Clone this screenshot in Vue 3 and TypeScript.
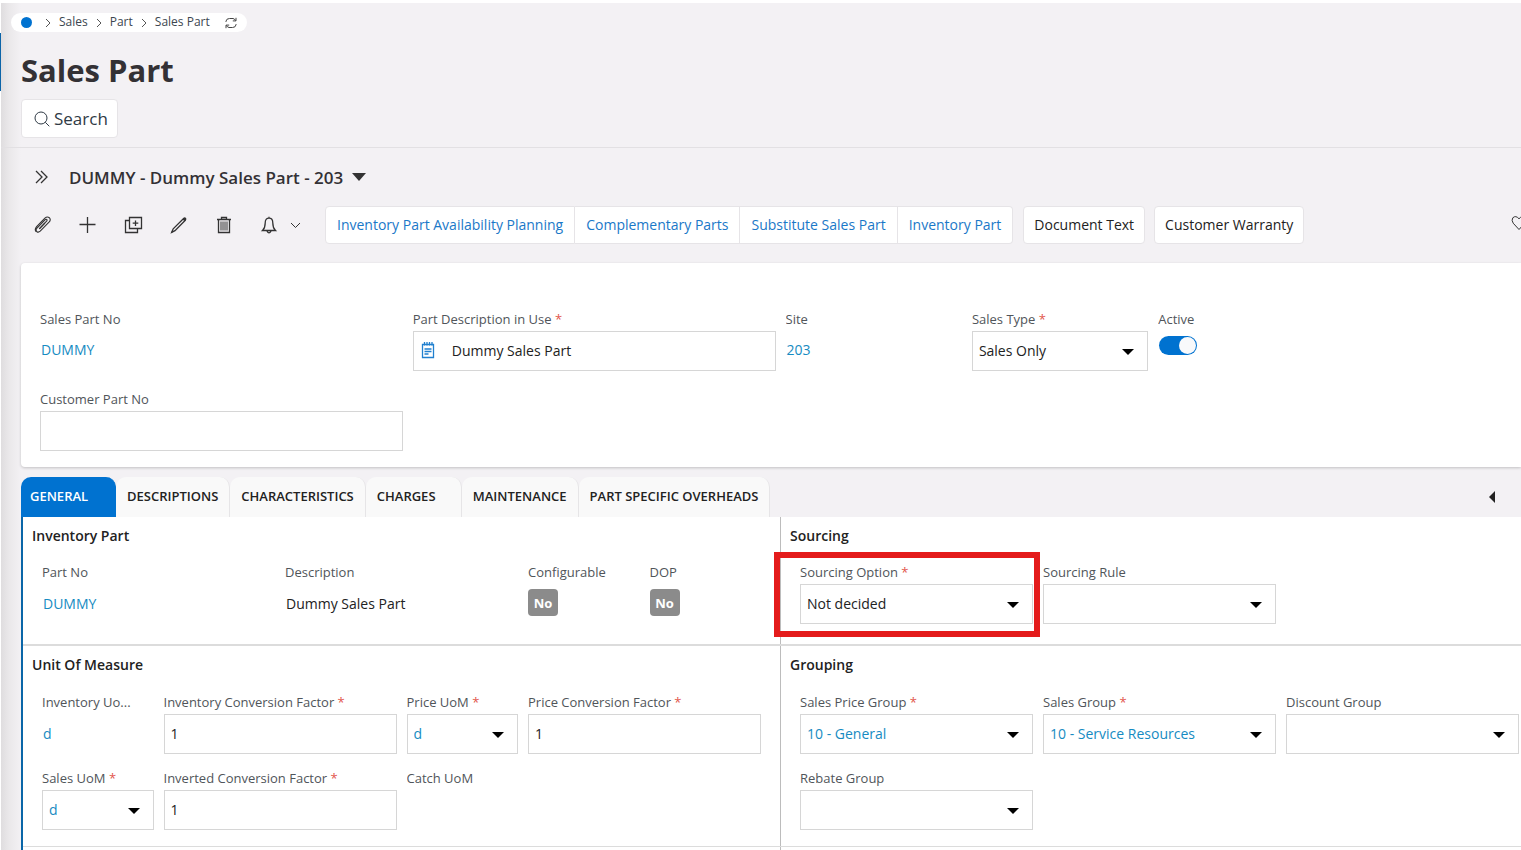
<script setup lang="ts">
import { ref } from 'vue'

type Kind = 'link' | 'text' | 'badge' | 'input' | 'select' | 'toggle' | 'note' | 'none'

interface Field {
  id: string
  label: string
  kind: Kind
  span: number
  value?: string
  required?: boolean
  accent?: boolean
  marked?: boolean
}

interface Section {
  title: string
  fields: Field[]
}

const crumbs: string[] = ['Sales', 'Part', 'Sales Part']

const linkCommands: string[] = [
  'Inventory Part Availability Planning',
  'Complementary Parts',
  'Substitute Sales Part',
  'Inventory Part',
]

const commands: string[] = ['Document Text', 'Customer Warranty']

const tabs: string[] = [
  'GENERAL',
  'DESCRIPTIONS',
  'CHARACTERISTICS',
  'CHARGES',
  'MAINTENANCE',
  'PART SPECIFIC OVERHEADS',
]
const activeTab = ref<string>('GENERAL')

const headFields: Field[] = [
  { id: 'sales-part-no', label: 'Sales Part No', kind: 'link', span: 2, value: 'DUMMY' },
  { id: 'part-description', label: 'Part Description in Use', kind: 'note', span: 2, value: 'Dummy Sales Part', required: true },
  { id: 'site', label: 'Site', kind: 'link', span: 1, value: '203' },
  { id: 'sales-type', label: 'Sales Type', kind: 'select', span: 1, value: 'Sales Only', required: true },
  { id: 'active', label: 'Active', kind: 'toggle', span: 1 },
  { id: 'customer-part-no', label: 'Customer Part No', kind: 'input', span: 2, value: '' },
]

const rows: Section[][] = [
  [
    {
      title: 'Inventory Part',
      fields: [
        { id: 'part-no', label: 'Part No', kind: 'link', span: 2, value: 'DUMMY' },
        { id: 'description', label: 'Description', kind: 'text', span: 2, value: 'Dummy Sales Part' },
        { id: 'configurable', label: 'Configurable', kind: 'badge', span: 1, value: 'No' },
        { id: 'dop', label: 'DOP', kind: 'badge', span: 1, value: 'No' },
      ],
    },
    {
      title: 'Sourcing',
      fields: [
        { id: 'sourcing-option', label: 'Sourcing Option', kind: 'select', span: 2, value: 'Not decided', required: true, marked: true },
        { id: 'sourcing-rule', label: 'Sourcing Rule', kind: 'select', span: 2, value: '' },
      ],
    },
  ],
  [
    {
      title: 'Unit Of Measure',
      fields: [
        { id: 'inventory-uom', label: 'Inventory Uo...', kind: 'link', span: 1, value: 'd' },
        { id: 'inventory-factor', label: 'Inventory Conversion Factor', kind: 'input', span: 2, value: '1', required: true },
        { id: 'price-uom', label: 'Price UoM', kind: 'select', span: 1, value: 'd', required: true, accent: true },
        { id: 'price-factor', label: 'Price Conversion Factor', kind: 'input', span: 2, value: '1', required: true },
        { id: 'sales-uom', label: 'Sales UoM', kind: 'select', span: 1, value: 'd', required: true, accent: true },
        { id: 'inverted-factor', label: 'Inverted Conversion Factor', kind: 'input', span: 2, value: '1', required: true },
        { id: 'catch-uom', label: 'Catch UoM', kind: 'none', span: 1 },
      ],
    },
    {
      title: 'Grouping',
      fields: [
        { id: 'sales-price-group', label: 'Sales Price Group', kind: 'select', span: 2, value: '10 - General', required: true, accent: true },
        { id: 'sales-group', label: 'Sales Group', kind: 'select', span: 2, value: '10 - Service Resources', required: true, accent: true },
        { id: 'discount-group', label: 'Discount Group', kind: 'select', span: 2, value: '' },
        { id: 'rebate-group', label: 'Rebate Group', kind: 'select', span: 2, value: '' },
      ],
    },
  ],
]

function isControl(kind: Kind): boolean {
  return kind === 'input' || kind === 'note' || kind === 'select' || kind === 'toggle'
}
</script>

<template>
  <div class="page">
    <div class="rail"><span class="rail-mark"></span></div>
    <main class="content">
      <header class="top">
        <nav class="crumbs" aria-label="Breadcrumb">
          <a href="#" class="home" aria-label="Home"></a>
          <template v-for="c in crumbs" :key="c">
            <svg class="sep" viewBox="0 0 6 10"><path d="M1 1l4 4-4 4" /></svg>
            <a href="#" class="crumb">{{ c }}</a>
          </template>
          <button class="refresh" type="button" aria-label="Refresh">
            <svg viewBox="0 0 12 12">
              <path d="M1 5V4.2Q1.4 1.5 4.5 1.5H8Q9.6 1.7 10.6 3.6M11 .8v3.1H7.8M11 7v.8Q10.6 10.500 7.500 10.500H4Q2.400 10.300 1.400 8.400M1 11.200V8.100h3.200" />
            </svg>
          </button>
        </nav>
        <h1>Sales Part</h1>
        <button class="search" type="button">
          <svg viewBox="0 0 16 16"><circle cx="7" cy="7" r="6" /><path d="M11.300 11.300L15.300 15.300" /></svg>
          Search
        </button>
      </header>

      <div class="record">
        <button class="plain" type="button" aria-label="Expand list">
          <svg class="ic-double" viewBox="0 0 13 14"><path d="M1 1l6 6-6 6M6 1l6 6-6 6" /></svg>
        </button>
        <h2>DUMMY - Dummy Sales Part - 203</h2>
        <button class="plain" type="button" aria-label="Choose record">
          <svg class="ic-down" viewBox="0 0 14 8"><path d="M0 0h14L7 8z" /></svg>
        </button>
      </div>

      <div class="toolbar">
        <div class="icons">
          <button class="plain" type="button" aria-label="Attachments">
            <svg class="ic clip" viewBox="0 0 18 18">
              <path d="M5.300 12.800L12.600 5.200Q13.400 4.200 12.700 3.500Q11.900 2.900 11 3.800L3 12Q1.300 14 2.700 15.500Q4.300 17 6.200 15.200L15 6.200Q17.300 3.700 15.300 1.700Q13.200 0 10.900 2.200L2.600 10.700Q.3 13.300 2 15.700" />
              <path d="M5.300 12.800L10.900 7" />
            </svg>
          </button>
          <button class="plain" type="button" aria-label="New">
            <svg class="ic" viewBox="0 0 18 18"><path d="M8.500 1v16M.5 8.500h16" /></svg>
          </button>
          <button class="plain" type="button" aria-label="Duplicate">
            <svg class="ic wide" viewBox="0 0 19 18">
              <path d="M5.500 1.500h12v11h-12zM5.500 4.500h-4v12h12v-4M11.500 4.500v5.500M8.700 7.200h5.600" />
            </svg>
          </button>
          <button class="plain" type="button" aria-label="Edit">
            <svg class="ic" viewBox="0 0 18 18">
              <path d="M1.700 16.300L3.200 12.800L13.600 2.500Q14.600 1.600 15.400 2.300Q16.200 3.200 15.300 4.300L5 14.700z" />
              <path class="solid" d="M1 17l1.300-2.800 1.500 1.500zM12.600 3.500l1.700-1.500 1.400.4.300 1.400-1.500 1.500z" />
            </svg>
          </button>
          <button class="plain" type="button" aria-label="Delete">
            <svg class="ic" viewBox="0 0 18 18">
              <path d="M2 3.500h14M6.500 3.500v-2h5v2M3.500 3.500v13h11v-13" />
              <path class="fine" d="M6 5.500v9M8 5.500v9M10 5.500v9M12 5.500v9" />
            </svg>
          </button>
          <button class="plain" type="button" aria-label="Notifications">
            <svg class="ic" viewBox="0 0 18 18">
              <path d="M2.500 14.500Q5.200 12 5.200 7Q5.200 2.200 9 2.200T12.800 7Q12.800 12 15.500 14.500zM9 .8v1.400M7 15.200Q9 18.500 11 15.200" />
            </svg>
          </button>
          <button class="plain more" type="button" aria-label="More notifications">
            <svg class="ic-chev" viewBox="0 0 11 7"><path d="M1 1l4.500 4.500L10 1" /></svg>
          </button>
        </div>
        <div class="group">
          <button v-for="c in linkCommands" :key="c" class="cmd" type="button">{{ c }}</button>
        </div>
        <button v-for="c in commands" :key="c" class="cmd" type="button">{{ c }}</button>
        <button class="plain fav" type="button" aria-label="Favourite">
          <svg viewBox="0 0 16 16"><path d="M8 14.500L2.200 8.200Q.2 5.200 1.800 2.800Q4.800 0 8 3.800Q11.200 0 14.200 2.800Q15.800 5.200 13.800 8.200z" /></svg>
        </button>
      </div>

      <section class="card grid">
        <div v-for="f in headFields" :key="f.id" class="field" :class="[`span-${f.span}`, { fresh: f.id === 'customer-part-no' }]">
          <component :is="isControl(f.kind) ? 'label' : 'span'" class="label" :for="isControl(f.kind) ? f.id : undefined">
            {{ f.label }} <em v-if="f.required">*</em>
          </component>
          <a v-if="f.kind === 'link'" href="#" class="value link">{{ f.value }}</a>
          <div v-else-if="f.kind === 'note'" class="box note">
            <svg class="ic-note" viewBox="0 0 14 18">
              <path d="M1.500 3.500h11v13h-11zM3.500 8h7M3.500 10.500h7M3.500 13h4" />
              <path d="M3.500 1v3.500M6 1v3.500M8.500 1v3.500M11 1v3.500" />
            </svg>
            <input :id="f.id" type="text" :value="f.value" />
          </div>
          <div v-else-if="f.kind === 'select'" class="pick">
            <select :id="f.id" class="box"><option>{{ f.value }}</option></select>
            <svg class="arrow" viewBox="0 0 12 6"><path d="M0 0h12L6 6z" /></svg>
          </div>
          <input v-else-if="f.kind === 'toggle'" :id="f.id" class="toggle" type="checkbox" checked />
          <input v-else :id="f.id" class="box" type="text" :value="f.value" />
        </div>
      </section>

      <div class="tabbar">
        <div class="tabs" role="tablist">
          <button
            v-for="t in tabs"
            :key="t"
            type="button"
            role="tab"
            class="tab"
            :class="{ active: t === activeTab }"
            :aria-selected="t === activeTab"
            @click="activeTab = t"
          >{{ t }}</button>
        </div>
        <button class="plain collapse" type="button" aria-label="Scroll tabs">
          <svg viewBox="0 0 6 12"><path d="M6 0v12L0 6z" /></svg>
        </button>
      </div>

      <div class="panel">
        <div v-for="(row, r) in rows" :key="r" class="panel-row">
          <section v-for="s in row" :key="s.title" class="section">
            <h3>{{ s.title }}</h3>
            <div class="grid">
              <div v-for="f in s.fields" :key="f.id" class="field" :class="`span-${f.span}`">
                <component :is="isControl(f.kind) ? 'label' : 'span'" class="label" :for="isControl(f.kind) ? f.id : undefined">
                  {{ f.label }} <em v-if="f.required">*</em>
                </component>
                <a v-if="f.kind === 'link'" href="#" class="value link">{{ f.value }}</a>
                <span v-else-if="f.kind === 'text'" class="value">{{ f.value }}</span>
                <span v-else-if="f.kind === 'badge'" class="badge">{{ f.value }}</span>
                <div v-else-if="f.kind === 'select'" class="pick">
                  <select :id="f.id" class="box" :class="{ accent: f.accent }"><option>{{ f.value }}</option></select>
                  <svg class="arrow" viewBox="0 0 12 6"><path d="M0 0h12L6 6z" /></svg>
                </div>
                <input v-else-if="f.kind === 'input'" :id="f.id" class="box" type="text" :value="f.value" />
                <span v-if="f.marked" class="marker"></span>
              </div>
            </div>
          </section>
        </div>
        <div class="panel-row rest">
          <section class="section"></section>
          <section class="section"></section>
        </div>
      </div>
    </main>
  </div>
</template>

<style>
body {
  margin: 0;
  background: #f3f1f4;
}
</style>

<style scoped>
.page {
  display: flex;
  box-sizing: border-box;
  min-height: 100vh;
  overflow: hidden;
  border-top: 3px solid #fff;
  background: #f3f1f4;
  color: #222;
  font-family: 'Open Sans', 'Noto Sans', sans-serif;
  font-size: 14px;
}
.rail {
  flex: none;
  width: 1px;
  background: #fff;
}
.rail-mark {
  display: block;
  height: 58px;
  margin-top: 30px;
  background: #0b64a8;
}
.content {
  display: flex;
  flex: 1;
  flex-direction: column;
  min-width: 0;
  background: linear-gradient(to right, #dfdddf, #eae8ea 8px, #f3f1f4 20px);
}
button,
input,
select {
  margin: 0;
  font: inherit;
  color: inherit;
}
a {
  color: inherit;
  text-decoration: none;
}
svg {
  display: block;
  fill: none;
  stroke: #333;
}

.top {
  display: flex;
  flex-direction: column;
  align-items: flex-start;
  padding: 10px 0 9px 20px;
  border-bottom: 1px solid #e2e0e3;
}
.crumbs {
  display: flex;
  align-items: center;
  height: 19px;
  margin-left: -10px;
  padding: 0 10px;
  border-radius: 10px;
  background: #fff;
  color: #3c4650;
  font-size: 12px;
}
.crumb {
  padding-bottom: 2px;
}
.home {
  width: 11px;
  height: 11px;
  margin-right: 5px;
  border-radius: 50%;
  background: #0072d0;
}
.sep {
  width: 6px;
  height: 10px;
  margin: 0 8px;
  stroke: #555;
}
.refresh {
  margin-left: 15px;
  padding: 0;
  border: 0;
  background: none;
}
.refresh svg {
  width: 12px;
  height: 12px;
  stroke: #444;
}
h1 {
  margin: 16px 0 7px;
  color: #333135;
  font-size: 31px;
  font-weight: 700;
  line-height: 44px;
}
.search {
  display: flex;
  align-items: center;
  gap: 4px;
  height: 39px;
  padding: 0 9px 0 12px;
  border: 1px solid #e6e4e7;
  border-radius: 4px;
  background: #fff;
  color: #2f3a45;
  font-size: 17px;
}
.search svg {
  width: 16px;
  height: 16px;
  stroke: #2f3a45;
}

.plain {
  flex: none;
  padding: 0;
  border: 0;
  background: none;
}
.record {
  display: flex;
  align-items: center;
  height: 58px;
  padding-left: 34px;
}
.ic-double {
  width: 13px;
  height: 14px;
  stroke-width: 1.3;
}
h2 {
  margin: 0 9px 0 21px;
  color: #333135;
  font-size: 17px;
  font-weight: 600;
}
.ic-down {
  width: 14px;
  height: 8px;
  fill: #333;
  stroke: none;
}

.toolbar {
  display: flex;
  align-items: center;
  height: 38px;
  margin-bottom: 19px;
  padding-left: 33px;
}
.icons {
  display: flex;
  flex: none;
  align-items: center;
  gap: 27px;
  margin-right: 24px;
}
.ic {
  width: 18px;
  height: 18px;
  stroke-width: 1.3;
}
.clip {
  stroke-width: 1.1;
}
.fine {
  stroke-width: 1;
}
.solid {
  fill: #333;
  stroke: none;
}
.wide {
  width: 19px;
}
.more {
  margin-left: -15px;
}
.ic-chev {
  width: 11px;
  height: 7px;
}
.group {
  display: flex;
  margin-right: 10px;
}
.cmd {
  flex: none;
  height: 38px;
  margin-right: 9px;
  padding: 0 10px 2px;
  border: 1px solid #e6e4e7;
  border-radius: 4px;
  background: #fff;
  color: #222;
}
.group .cmd {
  margin-right: 0;
  padding: 0 11px 2px;
  border-radius: 0;
  color: #1a78c8;
}
.group .cmd + .cmd {
  border-left: 0;
}
.group .cmd:first-child {
  border-radius: 4px 0 0 4px;
}
.group .cmd:last-child {
  border-radius: 0 4px 4px 0;
}
.fav {
  margin: 0 -6px 4px auto;
}
.fav svg {
  width: 16px;
  height: 16px;
}

.grid {
  display: grid;
  column-gap: 10px;
}
.card {
  grid-template-columns: repeat(8, minmax(0, 1fr));
  row-gap: 18px;
  margin-left: 20px;
  padding: 46px 0 16px 19px;
  border-radius: 4px 0 0 4px;
  background: #fff;
  box-shadow: 0 1px 3px rgba(0, 0, 0, 0.2);
}
.field {
  position: relative;
  min-width: 0;
}
.span-2 {
  grid-column-end: span 2;
}
.fresh {
  grid-column-start: 1;
}
.label {
  display: block;
  overflow: hidden;
  padding-bottom: 2px;
  color: #50555a;
  font-size: 13px;
  line-height: 20px;
  text-overflow: ellipsis;
  white-space: nowrap;
}
.label em {
  color: #e2564c;
  font-style: normal;
}
.value {
  display: block;
  padding-left: 1px;
  line-height: 38px;
}
.link,
.accent {
  color: #168bc2;
}
.box {
  display: block;
  box-sizing: border-box;
  width: 100%;
  height: 40px;
  padding: 0 6px 2px;
  border: 1px solid #d6d6d6;
  border-radius: 0;
  outline: 0;
  background: #fff;
}
.note {
  display: flex;
  align-items: center;
  gap: 17px;
  padding-left: 7px;
}
.note input {
  flex: 1;
  min-width: 0;
  padding: 0;
  border: 0;
  outline: 0;
}
.ic-note {
  flex: none;
  width: 14px;
  height: 18px;
  stroke: #2180cf;
  stroke-width: 1.3;
}
.pick {
  position: relative;
}
.pick select {
  appearance: none;
}
.arrow {
  position: absolute;
  top: 18px;
  right: 14px;
  width: 12px;
  height: 6px;
  fill: #000;
  stroke: none;
  pointer-events: none;
}
.toggle {
  display: flex;
  justify-content: flex-end;
  box-sizing: border-box;
  width: 38px;
  height: 19px;
  margin: 5px 0 0 1px;
  padding: 1px;
  border-radius: 10px;
  appearance: none;
  background: #0072d0;
}
.toggle::after {
  width: 17px;
  height: 17px;
  border-radius: 50%;
  background: #f8f9fb;
  content: '';
}
.badge {
  display: flex;
  align-items: center;
  justify-content: center;
  width: 30px;
  height: 27px;
  margin-top: 5px;
  border-radius: 4px;
  background: #8b8b8b;
  color: #fff;
  font-size: 13px;
  font-weight: 700;
}
.marker {
  position: absolute;
  inset: -10px -7px -13px -26px;
  border: 6px solid #e41b1b;
  pointer-events: none;
}

.tabbar {
  display: flex;
  align-items: center;
  justify-content: space-between;
  margin-top: 10px;
  padding-left: 20px;
}
.tabs {
  display: flex;
}
.tab {
  box-sizing: border-box;
  min-width: 96px;
  height: 40px;
  padding: 0 11px 2px;
  border: 0;
  border-right: 1px solid #e6e5e7;
  border-radius: 10px 10px 0 0;
  background: #f9f9f9;
  color: #222;
  font-size: 13px;
  font-weight: 600;
  text-align: left;
}
.tab.active {
  min-width: 95px;
  padding-left: 9px;
  border-right-color: #0072d0;
  background: #0072d0;
  color: #fff;
}
.collapse {
  margin-right: 26px;
}
.collapse svg {
  width: 6px;
  height: 12px;
  fill: #222;
  stroke: none;
}

.panel {
  display: flex;
  flex: 1;
  flex-direction: column;
  margin-left: 20px;
  border-left: 2px solid #0a66a8;
  background: #fff;
}
.panel-row {
  display: flex;
  border-bottom: 2px solid #dcdcdc;
}
.panel-row:nth-child(2) {
  border-bottom-width: 1px;
}
.panel-row.rest {
  flex: 1;
  border-bottom: 0;
}
.section {
  flex: 1 1 0;
  min-width: 0;
  padding: 9px 19px 20px;
  border-right: 1px solid #bcbcbc;
}
.section:last-child {
  padding-right: 2px;
  border-right: 0;
}
.panel-row:nth-child(2) .section {
  padding-bottom: 16px;
}
.panel-row:nth-child(2) h3 {
  margin-bottom: 17px;
}
.rest .section {
  padding-top: 0;
  padding-bottom: 0;
}
h3 {
  margin: 0 0 16px -10px;
  font-size: 14px;
  font-weight: 600;
  line-height: 20px;
}
.section .grid {
  grid-template-columns: repeat(6, minmax(0, 1fr));
  row-gap: 14px;
}
.section .value {
  line-height: 40px;
}
</style>
